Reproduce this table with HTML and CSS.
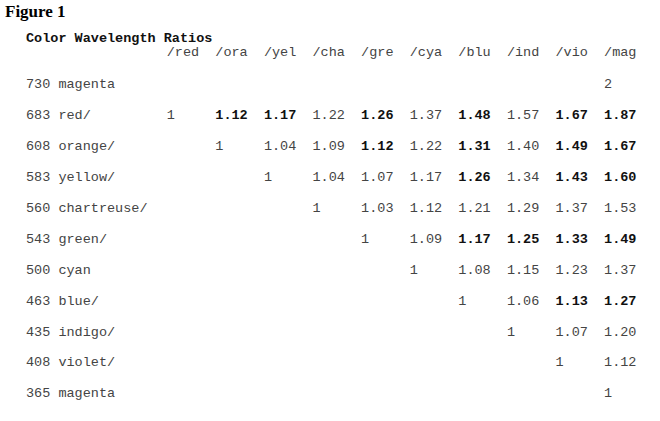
FILE: index.html
```html
<!DOCTYPE html>
<html>
<head>
<meta charset="utf-8">
<link rel="stylesheet" href="styles.css">
</head>
<body>
<div class="fig-label">Figure 1</div>
<div class="table">
  <div class="title">Color Wavelength Ratios</div>
  <div class="row head">
    <span></span><span>/red</span><span>/ora</span><span>/yel</span><span>/cha</span><span>/gre</span><span>/cya</span><span>/blu</span><span>/ind</span><span>/vio</span><span>/mag</span>
  </div>
  <div class="row"><span>730 magenta</span><span></span><span></span><span></span><span></span><span></span><span></span><span></span><span></span><span></span><span>2</span></div>
  <div class="row"><span>683 red/</span><span>1</span><b>1.12</b><b>1.17</b><span>1.22</span><b>1.26</b><span>1.37</span><b>1.48</b><span>1.57</span><b>1.67</b><b>1.87</b></div>
  <div class="row"><span>608 orange/</span><span></span><span>1</span><span>1.04</span><span>1.09</span><b>1.12</b><span>1.22</span><b>1.31</b><span>1.40</span><b>1.49</b><b>1.67</b></div>
  <div class="row"><span>583 yellow/</span><span></span><span></span><span>1</span><span>1.04</span><span>1.07</span><span>1.17</span><b>1.26</b><span>1.34</span><b>1.43</b><b>1.60</b></div>
  <div class="row"><span>560 chartreuse/</span><span></span><span></span><span></span><span>1</span><span>1.03</span><span>1.12</span><span>1.21</span><span>1.29</span><span>1.37</span><span>1.53</span></div>
  <div class="row"><span>543 green/</span><span></span><span></span><span></span><span></span><span>1</span><span>1.09</span><b>1.17</b><b>1.25</b><b>1.33</b><b>1.49</b></div>
  <div class="row"><span>500 cyan</span><span></span><span></span><span></span><span></span><span></span><span>1</span><span>1.08</span><span>1.15</span><span>1.23</span><span>1.37</span></div>
  <div class="row"><span>463 blue/</span><span></span><span></span><span></span><span></span><span></span><span></span><span>1</span><span>1.06</span><b>1.13</b><b>1.27</b></div>
  <div class="row"><span>435 indigo/</span><span></span><span></span><span></span><span></span><span></span><span></span><span></span><span>1</span><span>1.07</span><span>1.20</span></div>
  <div class="row"><span>408 violet/</span><span></span><span></span><span></span><span></span><span></span><span></span><span></span><span></span><span>1</span><span>1.12</span></div>
  <div class="row"><span>365 magenta</span><span></span><span></span><span></span><span></span><span></span><span></span><span></span><span></span><span></span><span>1</span></div>
</div>
</body>
</html>
```
FILE: styles.css
```css
html, body {
  margin: 0;
  padding: 0;
  background: #ffffff;
}
.fig-label {
  font-family: "Liberation Serif", "Times New Roman", serif;
  font-weight: bold;
  font-size: 17px;
  line-height: 20px;
  color: #000;
  padding: 2px 0 0 5px;
  height: 30px;
}
.table {
  font-family: "Liberation Mono", "Courier New", monospace;
  font-size: 13.5px;
  color: #444;
  padding-left: 26px;
}
.title {
  font-weight: bold;
  color: #111;
  line-height: 14px;
  height: 14px;
}
.row {
  display: grid;
  grid-template-columns: calc(17ch + 3px) repeat(10, 6ch);
  height: 30.9px;
  align-items: center;
  white-space: pre;
}
.row.head {
  height: 14px;
  line-height: 14px;
  margin-bottom: 9.5px;
}
.row b {
  font-weight: bold;
  color: #111;
}
```
